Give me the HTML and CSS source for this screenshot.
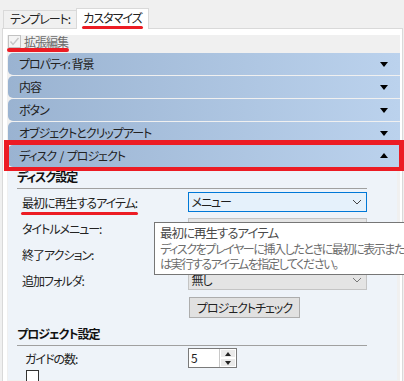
FILE: index.html
```html
<html>
	<head>
		<title>カスタマイズ</title>
		<link rel="stylesheet" href="styles.css">
	</head>
	<body>
		<div class="tabs">
			<div class="tab">テンプレート:</div>
			<div class="tab active"><span class="mark">カスタマイズ</span></div>
		</div>
		<div class="panel">
			<div class="inner">
				<div class="checkrow">
					<span class="mark wide"><span class="box disabled">
						<svg width="11" height="11" viewBox="0 0 11 11"><polyline points="1.5,5.5 4,8.5 9.5,2" fill="none" stroke="#c6c6c6" stroke-width="1.4"/></svg>
					</span><span class="dimtext">拡張編集</span></span>
				</div>
				<div class="header">プロパティ: 背景<i class="down"></i></div>
				<div class="header">内容<i class="down"></i></div>
				<div class="header">ボタン<i class="down"></i></div>
				<div class="header">オブジェクトとクリップアート<i class="down"></i></div>
				<div class="header open">ディスク &nbsp;/ &nbsp;プロジェクト<i class="up"></i><span class="frame"></span></div>
				<div class="content">
					<div class="group">
						<div class="group-title">ディスク設定</div>
						<div class="row">
							<span class="label"><span class="mark">最初に再生するアイテム:</span></span>
							<div class="select focus">メニュー
								<svg width="10" height="6" viewBox="0 0 10 6"><polyline points="1,1 5,5 9,1" fill="none" stroke="#444" stroke-width="1"/></svg>
							</div>
						</div>
						<div class="row">
							<span class="label">タイトルメニュー:</span>
							<div class="select off"></div>
						</div>
						<div class="row">
							<span class="label">終了アクション:</span>
							<div class="select off"></div>
						</div>
						<div class="row">
							<span class="label">追加フォルダ:</span>
							<div class="select off">無し
								<svg width="10" height="6" viewBox="0 0 10 6"><polyline points="1,1 5,5 9,1" fill="none" stroke="#777" stroke-width="1"/></svg>
							</div>
						</div>
						<div class="row btnrow">
							<button class="btn">プロジェクトチェック</button>
						</div>
					</div>
					<div class="group second">
						<div class="group-title">プロジェクト設定</div>
						<div class="row">
							<span class="label guide">ガイドの数:</span>
							<div class="spin">
								<span class="spin-value">5</span>
								<span class="spin-buttons">
									<span class="spin-btn"><i class="tri-up"></i></span>
									<span class="spin-btn"><i class="tri-down"></i></span>
								</span>
							</div>
						</div>
						<div class="row small">
							<span class="box plain"></span>
						</div>
					</div>
				</div>
			</div>
		</div>
		<div class="tooltip">
			<div class="tip-title">最初に再生するアイテム</div>
			<div class="tip-body">ディスクをプレイヤーに挿入したときに最初に表示また<br>は実行するアイテムを指定してください。</div>
		</div>
	</body>
</html>
```

FILE: styles.css
```css
body {
	margin: 0;
	width: 404px;
	height: 381px;
	overflow: hidden;
	background: #f0f0f0;
	color: #1e1e1e;
	font-family: "Noto Sans CJK JP", sans-serif;
	font-size: 12px;
	font-feature-settings: "palt";
	letter-spacing: -1px;
	position: relative;
}

.tabs {
	display: flex;
	align-items: flex-end;
	height: 28px;
	padding-left: 3px;
}
.tab {
	height: 17px;
	line-height: 16px;
	padding: 0 6px 0 6px;
	border: 1px solid #d9d9d9;
	border-bottom: none;
	border-right: none;
	color: #222;
}
.tab.active {
	position: relative;
	z-index: 1;
	height: 20px;
	line-height: 17px;
	margin-bottom: -1px;
	padding: 0 6px;
	background: #ffffff;
	border-right: 1px solid #d9d9d9;
}

.mark {
	position: relative;
	display: inline-flex;
	align-items: center;
}
.mark::after {
	content: "";
	position: absolute;
	left: -1px;
	right: -1px;
	bottom: -4px;
	height: 3px;
	background: #ec1c24;
	border-radius: 2px;
}
.tab .mark::after {
	bottom: -3px;
}
.mark.wide {
	z-index: 1;
}
.mark.wide::after {
	bottom: -4px;
	height: 4px;
}

.panel {
	margin-left: 2px;
	width: 393px;
	height: 346px;
	border: 1px solid #d9d9d9;
	border-bottom: none;
	background: #ffffff;
	padding: 6px 2px 0 4px;
}
.inner {
	background: #f0f0f0;
	height: 100%;
}

.checkrow {
	height: 18px;
	display: flex;
	align-items: flex-start;
	padding: 0 0 0 1px;
}
.box {
	display: inline-flex;
	align-items: center;
	justify-content: center;
	width: 11px;
	height: 11px;
	border: 1px solid #c2c2c2;
	background: #f4f4f4;
	margin-right: 3px;
}
.dimtext {
	color: #6d6d6d;
	line-height: 12px;
}

.header {
	position: relative;
	height: 22px;
	line-height: 21px;
	margin: 0 0 1px 1px;
	padding-left: 11px;
	border-radius: 5px 0 0 5px;
	background: linear-gradient(to right, #9ab3d1, #bbd2ed);
	color: #222;
}
.header i {
	position: absolute;
	right: 12px;
	top: 9px;
	width: 0;
	height: 0;
	border-left: 4px solid transparent;
	border-right: 4px solid transparent;
}
.header .down {
	border-top: 5px solid #000;
}
.header .up {
	top: 8px;
	border-bottom: 5px solid #000;
}
.frame {
	position: absolute;
	left: -4px;
	top: -5px;
	right: -4px;
	bottom: -4px;
	border: 5px solid #ec1c24;
	border-bottom-width: 4px;
}

.content {
	margin: -1px 3px 0 1px;
	padding-top: 3px;
	background: #eef3f9;
	height: 210px;
}
.group {
	margin-left: 9px;
	width: 350px;
}
.group-title {
	font-weight: bold;
	line-height: 14px;
	padding-bottom: 4px;
	border-bottom: 1px solid #a0a0a0;
	color: #111;
}
.group.second {
	margin-top: 9px;
}
.row {
	display: flex;
	align-items: center;
	height: 20px;
	margin-top: 6px;
}
.group-title + .row {
	margin-top: 3px;
}
.second .group-title + .row {
	margin-top: 2px;
}
.label {
	width: 166px;
	padding-left: 5px;
	color: #222;
}
.label.guide {
	padding-left: 8px;
	width: 163px;
}
.select {
	box-sizing: border-box;
	width: 180px;
	height: 20px;
	line-height: 18px;
	padding-left: 3px;
	display: flex;
	align-items: center;
	justify-content: space-between;
	padding-right: 4px;
}
.select.focus {
	border: 1px solid #0078d7;
	background: #e5f1fb;
}
.select.off {
	border: 1px solid #c4c4c4;
	background: #e4e4e4;
}
.btnrow {
	height: 21px;
	margin-top: 7px;
	padding-left: 172px;
}
.btn {
	width: 111px;
	height: 21px;
	padding: 0;
	border: 1px solid #adadad;
	background: #e1e1e1;
	font-family: "Noto Sans CJK JP", sans-serif;
	font-size: 12px;
	font-feature-settings: "palt";
	letter-spacing: -1px;
	color: #222;
}
.spin {
	display: flex;
	height: 20px;
	width: 49px;
	box-sizing: border-box;
	border: 1px solid #7a7a7a;
	background: #ffffff;
}
.spin-value {
	flex: 1;
	line-height: 18px;
	padding-left: 2px;
}
.spin-buttons {
	display: flex;
	flex-direction: column;
	width: 16px;
	border-left: 1px solid #c8c8c8;
}
.spin-btn {
	flex: 1;
	display: flex;
	align-items: center;
	justify-content: center;
	background: #eaeaea;
	border: 1px solid #ffffff;
}
.tri-up, .tri-down {
	width: 0;
	height: 0;
	border-left: 3px solid transparent;
	border-right: 3px solid transparent;
}
.tri-up {
	border-bottom: 4px solid #222;
}
.tri-down {
	border-top: 4px solid #222;
}
.row.small {
	height: 13px;
	margin-top: 2px;
	padding-left: 9px;
}
.box.plain {
	border-color: #333;
	background: #ffffff;
}

.tooltip {
	position: absolute;
	left: 154px;
	top: 222px;
	width: 244px;
	height: 49px;
	padding: 2px 0 0 5px;
	background: #ffffff;
	border: 1px solid #767676;
	border-right: none;
	white-space: nowrap;
	overflow: hidden;
	z-index: 2;
}
.tip-title {
	color: #4b4b4b;
	line-height: 16px;
	font-size: 12.5px;
}
.tip-body {
	color: #6d6d6d;
	line-height: 15px;
	letter-spacing: -1.4px;
}
```
